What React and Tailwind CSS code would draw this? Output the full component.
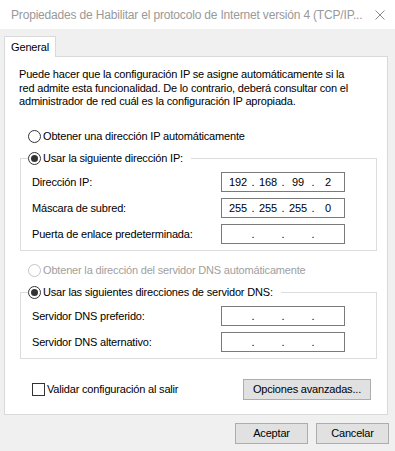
import { Fragment } from "react";

function Radio({ checked, disabled, label }) {
  return (
    <div className="flex items-center h-[16px]">
      <span className={disabled ? "w-[13px] h-[13px] rounded-full border border-[#c4c4c4] bg-white" : "w-[13px] h-[13px] rounded-full border border-[#333333] bg-white flex items-center justify-center"}>
        {checked && <span className="w-[7px] h-[7px] rounded-full bg-[#333333]" />}
      </span>
      <span className={disabled ? "ml-[2px] text-[#a0a0a0]" : "ml-[2px] text-black"}>{label}</span>
    </div>
  );
}

function IpBox({ parts }) {
  return (
    <div className="w-[124px] h-[20px] border border-[#7a7a7a] bg-white flex items-center pl-[3px]">
      {parts.map((p, i) => (
        <Fragment key={i}>
          <span className="w-[26px] text-center">{p}</span>
          {i < 3 && <span className="w-[4px] text-center">.</span>}
        </Fragment>
      ))}
    </div>
  );
}

function Row({ label, parts }) {
  return (
    <div className="flex items-center h-[20px]">
      <span className="w-[189px]">{label}</span>
      <IpBox parts={parts} />
    </div>
  );
}

function Group({ label, children }) {
  return (
    <fieldset className="ml-[1px] w-[357px] border border-[#dcdcdc] pl-[7px] pb-[6px]">
      <legend className="pr-[8px]">
        <Radio checked label={label} />
      </legend>
      <div className="pt-[6px] pl-[4px] flex flex-col gap-[6px]">{children}</div>
    </fieldset>
  );
}

export default function App() {
  const empty = ["", "", "", ""];
  return (
    <div className="w-[395px] h-[451px] bg-[#f0f0f0] font-['Liberation_Sans',sans-serif] text-[11px] tracking-[-0.18px] text-black flex flex-col">
      <div className="h-[29px] bg-white flex items-center justify-between pl-[11px] pr-[10px] shrink-0">
        <span className="text-[12px] text-[#999999] whitespace-nowrap">Propiedades de Habilitar el protocolo de Internet versión 4 (TCP/IP...</span>
        <svg width="10" height="10" viewBox="0 0 10 10" className="shrink-0">
          <path d="M0.5 0.5 L9.5 9.5 M9.5 0.5 L0.5 9.5" stroke="#8a8a8a" strokeWidth="1" fill="none" />
        </svg>
      </div>

      <div className="pl-[4px] pt-[7px]">
        <div className="relative z-10 -mb-px w-[52px] h-[21px] bg-white border border-b-0 border-[#d9d9d9] flex items-center justify-center">
          General
        </div>
        <div className="w-[384px] h-[359px] border border-[#d9d9d9] bg-white pl-[14px] pt-[11px]">
          <p className="leading-[13.5px] whitespace-nowrap">
            Puede hacer que la configuración IP se asigne automáticamente si la
            <br />
            red admite esta funcionalidad. De lo contrario, deberá consultar con el
            <br />
            administrador de red cuál es la configuración IP apropiada.
          </p>

          <div className="mt-[19.5px] ml-[9px]">
            <Radio label="Obtener una dirección IP automáticamente" />
          </div>

          <div className="mt-[6px]">
            <Group label="Usar la siguiente dirección IP:">
              <Row label="Dirección IP:" parts={["192", "168", "99", "2"]} />
              <Row label="Máscara de subred:" parts={["255", "255", "255", "0"]} />
              <Row label="Puerta de enlace predeterminada:" parts={empty} />
            </Group>
          </div>

          <div className="mt-[11px] ml-[9px]">
            <Radio disabled label="Obtener la dirección del servidor DNS automáticamente" />
          </div>

          <div className="mt-[6px]">
            <Group label="Usar las siguientes direcciones de servidor DNS:">
              <Row label="Servidor DNS preferido:" parts={empty} />
              <Row label="Servidor DNS alternativo:" parts={empty} />
            </Group>
          </div>

          <div className="mt-[20px] flex items-center h-[21px]">
            <span className="ml-[13px] w-[13px] h-[13px] border border-[#333333] bg-white" />
            <span className="ml-[2px]">Validar configuración al salir</span>
            <button className="ml-auto mr-[16px] w-[128px] h-[21px] bg-[#e1e1e1] border border-[#adadad]">
              Opciones avanzadas...
            </button>
          </div>
        </div>
      </div>

      <div className="mt-[8px] flex justify-end gap-[8px] pr-[6px]">
        <button className="w-[73px] h-[21px] bg-[#e1e1e1] border border-[#adadad]">Aceptar</button>
        <button className="w-[73px] h-[21px] bg-[#e1e1e1] border border-[#adadad]">Cancelar</button>
      </div>
    </div>
  );
}
